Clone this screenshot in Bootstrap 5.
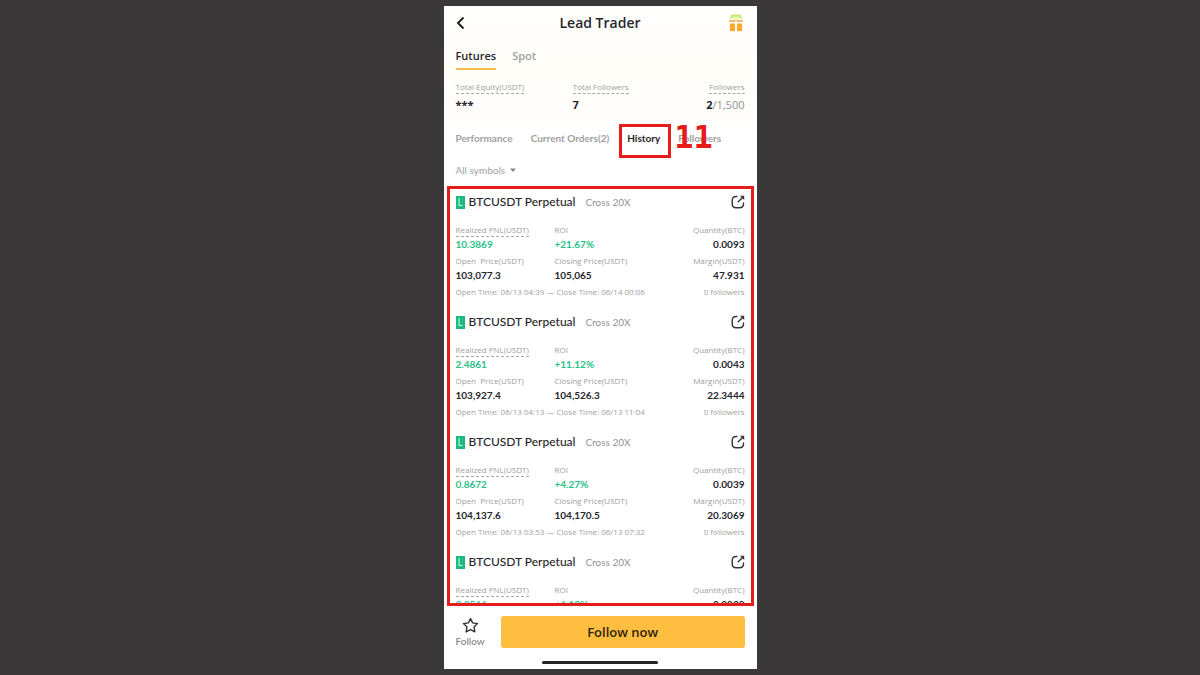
<!DOCTYPE html>
<html lang="en">
<head>
<meta charset="utf-8">
<meta name="viewport" content="width=device-width, initial-scale=1">
<title>Lead Trader</title>
<link href="https://cdn.jsdelivr.net/npm/bootstrap@5.3.0/dist/css/bootstrap.min.css" rel="stylesheet">
<style>
:root { --ink: #26262a; --muted: #a0a0a2; --mark: #e51c1a; --amber: #ffbe3f; --green: #26bf89; }
body { background: #3a3838; color: var(--ink); font-family: "Open Sans", sans-serif; }
.screen { padding: 6px 0; }
.phone { max-width: 313px; background: linear-gradient(#fff, #fffdf8 60px, #fff 130px); }
.phone > :not(.orders) { flex-shrink: 0; }
.alt { font-family: Lato, sans-serif; }
.gutter { padding-left: 12px; padding-right: 12px; }
.plain { background: none; border: 0; padding: 0; color: inherit; display: block; }
.topbar { height: 34px; }
.topbar h1 { font-size: 14px; line-height: 34px; font-weight: 600; }
.market { padding-top: 7px; gap: 16px; font-size: 11px; line-height: 18px; font-weight: 600; }
.market a { color: var(--muted); padding-bottom: 3px; border-bottom: 2px solid transparent; text-decoration: none; }
.market a.active { color: var(--ink); border-color: #f3bd4d; }
.stats { padding-top: 11px; display: grid; grid-template-columns: 117px 1fr auto; }
.tag { font-size: 8px; line-height: 12px; color: var(--muted); white-space: pre; }
.hint { border-bottom: 1px dashed #aaa; width: fit-content; margin-bottom: -1px; }
.amount { font-size: 11px; line-height: 18px; font-weight: 700; margin-top: 3px; }
.amount span { font-weight: 400; color: #929294; }
.sections { padding-top: 15px; height: 43px; gap: 18px; font-size: 10px; line-height: 18px; font-weight: 700; }
.sections a { display: block; color: var(--muted); text-decoration: none; }
.sections a.active { color: var(--ink); }
.outline { position: absolute; inset: -5px -11px -11px -8px; border: 3px solid var(--mark); pointer-events: none; }
.step { position: absolute; left: 47px; top: -10px; font: bold 32px/36px "DejaVu Sans Mono", monospace; color: var(--mark); pointer-events: none; }
.filter { padding-top: 5px; padding-bottom: 8px; font-size: 10px; line-height: 16px; color: var(--muted); }
.orders { margin: 0 3px; padding: 0 6px; border: 3px solid var(--mark); min-height: 0; }
.order { padding-bottom: 11px; }
.pair-row { height: 26px; margin-bottom: 9px; }
.side { width: 9px; height: 13px; line-height: 13px; font-size: 10px; color: #d5ffed; background: #1fb981; text-align: center; margin-right: 4px; }
.pair { font-size: 12px; line-height: 18px; font-weight: 500; margin: 0; }
.lever { font-size: 10px; line-height: 18px; color: #929294; margin-left: 10px; }
.cells { display: grid; grid-template-columns: 99px 1fr auto; margin-bottom: 3px; }
.cells dt { font-weight: 400; }
.cells dd { margin: 0; font: 700 10px/16px Lato, sans-serif; }
.gain { color: var(--green); }
.footbar { padding-top: 10px; padding-bottom: 13px; gap: 16px; }
.follow { font-size: 10px; line-height: 14px; color: #858587; font-weight: 500; }
.cta { --bs-btn-bg: var(--amber); --bs-btn-hover-bg: #f5b12c; --bs-btn-color: #2d230f; --bs-btn-border-radius: 3px; --bs-btn-font-size: 13px; --bs-btn-font-weight: 600; --bs-btn-line-height: 20px; --bs-btn-padding-y: 6px; }
.grip { width: 116px; height: 3px; border-radius: 2px; background: #242325; margin: 0 auto 5px; }
</style>
</head>
<body>
<div class="screen vh-100 d-flex flex-column overflow-hidden">
<main class="phone w-100 mx-auto d-flex flex-column flex-grow-1 overflow-hidden">
  <header class="topbar gutter d-flex align-items-center justify-content-between">
    <button class="plain" type="button" aria-label="Back"><svg class="d-block" width="24" height="14" viewBox="0 0 24 14" fill="none" stroke="#222" stroke-width="2"><path d="M7.500 1.500 2 7l5.500 5.500"/></svg></button>
    <h1 class="m-0">Lead Trader</h1>
    <button class="plain" type="button" aria-label="Rewards"><svg class="d-block" width="24" height="18" viewBox="0 0 24 18"><path d="M11.500 4.500V3q0-1.500 1.500-1.500h6q1.500 0 1.500 1.500v1.500" fill="#e6f9b5" stroke="#b9ee65" stroke-width="2"/><path d="M9 6h6v2H9zm8 0h6v2h-6z" fill="#ffb37c"/><path d="M10 9.500h5V17h-5zm7 0h5V17h-5z" fill="#ffa928"/><path d="M15 4.500h2v3h-2z" fill="#d9ef70"/></svg></button>
  </header>
  <nav class="market gutter d-flex" aria-label="Market"><a class="active" href="#" aria-current="page">Futures</a><a href="#">Spot</a></nav>
  <section class="stats gutter">
    <div><div class="tag hint">Total Equity(USDT)</div><div class="amount">***</div></div>
    <div><div class="tag hint">Total Followers</div><div class="amount">7</div></div>
    <div class="text-end"><div class="tag hint ms-auto">Followers</div><div class="amount">2<span>/1,500</span></div></div>
  </section>
  <nav class="sections gutter alt d-flex align-items-start" aria-label="Trader details">
    <a href="#">Performance</a><a href="#">Current Orders(2)</a>
    <div class="position-relative"><a class="active" href="#" aria-current="page">History</a><span class="outline"></span><span class="step">11</span></div>
    <a href="#">Followers</a>
  </nav>
  <div class="filter gutter alt"><button class="plain d-flex align-items-center" type="button">All symbols<svg class="ms-1" width="8" height="5" viewBox="0 0 8 5"><path d="M1 .5h6L4 4z" fill="#858587"/></svg></button></div>
  <section class="orders flex-grow-1 overflow-hidden" id="orders" aria-label="Order history"></section>
  <footer class="footbar gutter d-flex align-items-stretch">
    <button class="plain follow alt" type="button"><svg class="d-block mx-auto" width="17" height="17" viewBox="0 0 16 16" fill="none" stroke="#303033" stroke-width="1.300" stroke-linejoin="round"><path d="m8 1.500 2 4 4.600.7-3.300 3.200.8 4.600L8 11.900 3.900 14l.8-4.600L1.400 6.200 6 5.500z"/></svg>Follow</button>
    <button class="btn cta border-0 flex-grow-1" type="button">Follow now</button>
  </footer>
  <div class="grip"></div>
</main>
</div>
<template id="order">
  <article class="order">
    <div class="pair-row d-flex align-items-center">
      <span class="side">L</span><h2 class="pair alt">BTCUSDT Perpetual</h2><span class="lever alt">Cross 20X</span>
      <button class="plain ms-auto" type="button" aria-label="Share order"><svg class="d-block" width="14" height="14" viewBox="0 0 14 14" fill="none" stroke="#333" stroke-width="1.400"><path d="M6.500 1.500H5.200Q1.200 1.500 1.200 5.500v3.300q0 4 4 4h3.300q4 0 4-4V7.500M12 2 6.800 7.200"/><path d="M9 .8h4.200V5z" fill="#333" stroke="none"/></svg></button>
    </div>
    <dl class="cells">
      <div><dt class="tag hint">Realized PNL(USDT)</dt><dd class="gain" data-k="0"></dd></div>
      <div><dt class="tag">ROI</dt><dd class="gain" data-k="1"></dd></div>
      <div class="text-end"><dt class="tag">Quantity(BTC)</dt><dd data-k="2"></dd></div>
    </dl>
    <dl class="cells">
      <div><dt class="tag">Open  Price(USDT)</dt><dd data-k="3"></dd></div>
      <div><dt class="tag">Closing Price(USDT)</dt><dd data-k="4"></dd></div>
      <div class="text-end"><dt class="tag">Margin(USDT)</dt><dd data-k="5"></dd></div>
    </dl>
    <div class="tag times d-flex justify-content-between"><span data-k="6"></span><span>0 followers</span></div>
  </article>
</template>
<script src="https://cdn.jsdelivr.net/npm/bootstrap@5.3.0/dist/js/bootstrap.bundle.min.js"></script>
<script>
const orders = [
  ["10.3869", "+21.67%", "0.0093", "103,077.3", "105,065", "47.931", "Open Time: 06/13 04:39 — Close Time: 06/14 00:06"],
  ["2.4861", "+11.12%", "0.0043", "103,927.4", "104,526.3", "22.3444", "Open Time: 06/13 04:13 — Close Time: 06/13 11:04"],
  ["0.8672", "+4.27%", "0.0039", "104,137.6", "104,170.5", "20.3069", "Open Time: 06/13 03:53 — Close Time: 06/13 07:32"],
  ["0.8566", "+6.13%", "0.0030"]
];
const template = document.getElementById("order");
for (const row of orders) {
  const item = template.content.cloneNode(true);
  if (row.length < 4) item.querySelectorAll(".cells ~ .cells, .times").forEach(el => el.remove());
  item.querySelectorAll("[data-k]").forEach(el => { el.textContent = row[el.dataset.k]; });
  document.getElementById("orders").append(item);
}
</script>
</body>
</html>
